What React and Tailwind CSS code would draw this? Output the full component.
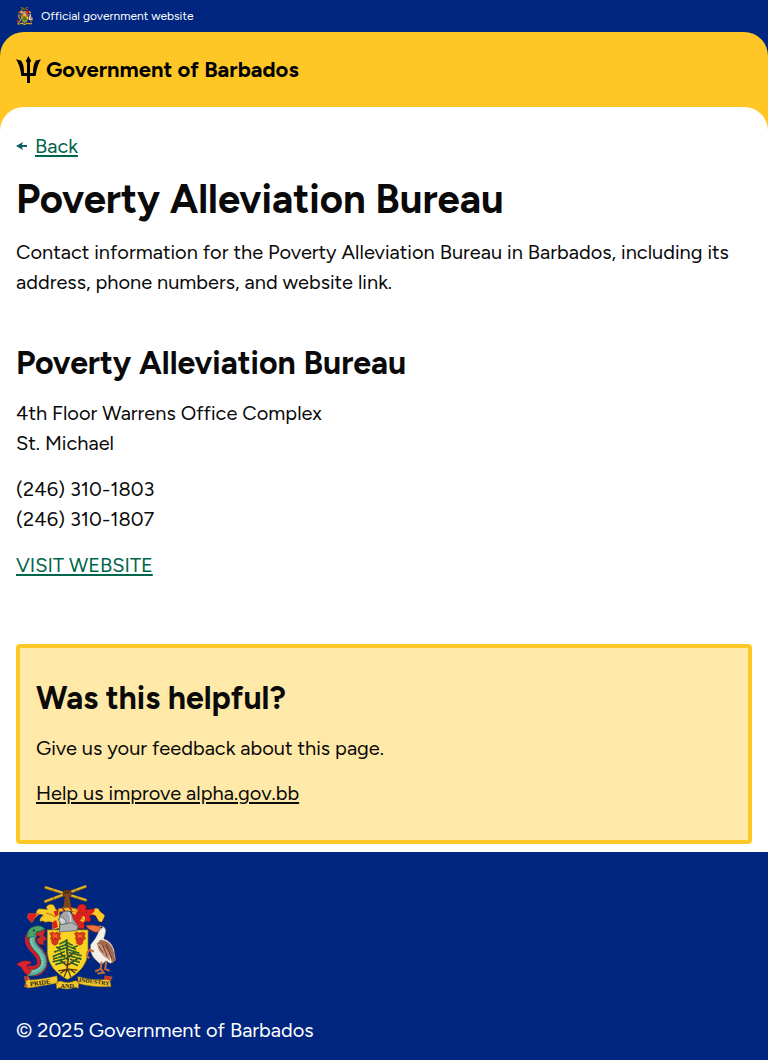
import React from "react";

function CoatOfArms({ className, title }) {
  return (
    <svg viewBox="18 22 306 322" className={className} role="img" aria-label={title}>
      {/* crossed sugar canes and raised arm */}
      <g strokeLinecap="round" fill="none">
        <path d="M107 74 L228 29 M108 32 L229 70" stroke="#8a6a10" strokeWidth="9" />
        <path d="M107 73 L228 28 M109 31 L229 69" stroke="#e3b32c" strokeWidth="6" />
        <path d="M130 37 v4 M200 38 v4 M132 62 v4 M205 61 v4" stroke="#8a6a10" strokeWidth="3" />
      </g>
      <path d="M160 94 L165 60 L160 53 L162 42 L171 38 L184 41 L186 53 L181 60 L187 94Z" fill="#7a4522" stroke="#351c10" strokeWidth="2" />
      <path d="M162 47 h20 M168 39 v12 M175 39 v12" stroke="#351c10" strokeWidth="1.5" />
      {/* mantling */}
      <path d="M150 102 Q138 101 135 90 Q134 81 121 82 Q105 88 113 98 Q98 96 88 96 Q81 97 78 111 L57 110 Q51 116 54 125 L66 138 L74 126 L82 117 Q91 109 101 116 Q88 122 91 135 Q99 130 106 137 Q119 133 128 137 L128 160 L151 154Z" fill="#f8cc27" stroke="#7b5412" strokeWidth="1.5" />
      <path d="M78 111 L57 109 L52 125 L66 137 L75 124 Q78 113 91 107Z M132 104 L145 100 L147 114 L138 120Z M128 137 L140 130 L145 151 L129 158Z" fill="#df201e" />
      <path d="M188 103 Q203 99 205 90 Q209 80 223 82 Q236 89 228 99 L250 97 Q264 92 271 103 L286 115 L281 132 L270 136 L260 119 Q248 111 240 119 Q249 125 241 136 Q231 132 224 138 L225 157 L187 153Z" fill="#df201e" stroke="#78151b" strokeWidth="1.5" />
      <path d="M255 96 Q268 91 272 104 L287 116 L278 136 L269 134 L260 117 Q253 112 243 113 Q260 106 255 96Z M193 101 L207 99 L197 114 L187 109Z M220 119 Q233 116 223 137 L212 132Z" fill="#f8cc27" />
      <path d="M137 96 Q145 105 158 102 M109 109 Q125 111 137 121 M203 107 Q220 111 236 107 M205 126 Q215 122 223 129" stroke="#8a3515" strokeWidth="2" fill="none" />
      {/* helm */}
      <path d="M145 96 Q174 88 203 96 L198 106 Q174 99 149 106Z" fill="#efbd27" stroke="#7b5412" strokeWidth="1.5" />
      <path d="M158 94 l8 9 M179 91 l8 10" stroke="#cf2020" strokeWidth="5" />
      <path d="M152 116 Q161 101 177 103 Q189 107 191 127 L207 149 L202 163 H149 L152 140 L147 128Z" fill="#a5a8aa" stroke="#4b4f52" strokeWidth="2" />
      <path d="M151 120 Q166 121 171 139 L155 146 L148 131Z" fill="#c9cbcc" stroke="#5b5e60" strokeWidth="2" />
      <path d="M177 106 Q186 119 184 138 L203 149 M156 153 L184 139 M153 128 l10 5" stroke="#e2e3e3" strokeWidth="3" fill="none" />
      {/* shield */}
      <path d="M113 160 H236 V230 Q230 282 174 310 Q118 282 113 230Z" fill="#f9d423" stroke="#a98316" strokeWidth="2" />
      {/* helm base over the shield edge */}
      <path d="M151 145 L186 138 L206 149 L202 162 L150 166Z" fill="#b1b4b5" stroke="#4b4f52" strokeWidth="2" />
      <g fill="#d9341e" stroke="#9e2a15" strokeWidth="1.5">
        <path d="M120 170 l9-4 7 4 7-4 10 4-3 9 4 8-10 4-6-4-7 4-9-4 3-8Z" />
        <path d="M195 170 l9-4 7 4 7-4 10 4-3 9 4 8-10 4-6-4-7 4-9-4 3-8Z" />
        <path d="M125 190 q12-6 22 0 l-3 12 -8 5 -9-6Z M200 190 q12-6 22 0 l-3 12 -8 5 -9-6Z" />
      </g>
      <path d="M129 173 l15 10 M130 184 l14-10 M204 173 l15 10 M205 184 l14-10" stroke="#f08b1e" strokeWidth="3" />
      {/* bearded fig tree */}
      <path d="M172 286 L176 248 L170 200 M174 270 L151 250 M177 266 L204 247 M175 250 L151 230 M176 244 L197 224" stroke="#573614" strokeWidth="5" fill="none" />
      <path d="M173 278 L152 292 M174 278 L164 302 M175 278 L184 303 M177 277 L198 290 M172 280 L146 284 M177 279 L204 282" stroke="#513516" strokeWidth="4" fill="none" />
      <g fill="none" stroke="#235a2c" strokeWidth="5" strokeLinecap="round" strokeDasharray="4 4">
        <path d="M169 193 L150 203 M171 198 L188 206 M168 205 L144 214 M174 209 L198 218" />
        <path d="M169 214 L134 227 M175 219 L208 230 M164 226 L131 240 M180 229 L216 238" />
        <path d="M166 237 L129 249 M180 238 L216 249 M165 248 L131 256 M183 249 L210 258" />
        <path d="M166 257 L138 265 M185 259 L205 268 M152 218 L138 211 M192 213 L205 208 M172 190 L174 240" />
      </g>
      <g fill="none" stroke="#4c8f35" strokeWidth="3" strokeLinecap="round" strokeDasharray="3 8">
        <path d="M155 199 L184 200 M148 211 L194 212 M141 225 L205 224 M133 244 L214 243 M139 257 L207 254" />
      </g>
      {/* dolphin */}
      <g fill="none" strokeLinecap="round">
        <path d="M70 170 Q52 190 72 213 Q103 240 97 266 Q88 288 61 284" stroke="#c71f2b" strokeWidth="32" />
        <path d="M74 170 Q58 192 78 214 Q108 241 101 267 Q91 290 59 291" stroke="#1d5652" strokeWidth="19" />
        <path d="M74 170 Q58 192 78 214 Q108 241 101 267 Q91 290 59 291" stroke="#67b8a3" strokeWidth="16" />
        <path d="M70 172 Q54 194 76 217 Q104 241 97 267 Q90 283 60 286" stroke="#b6ded0" strokeWidth="3" strokeDasharray="2 6" />
        <path d="M80 172 Q65 192 83 211 Q113 239 107 267 Q97 294 60 296" stroke="#31847d" strokeWidth="3" strokeDasharray="3 6" />
      </g>
      <path d="M54 298 Q38 286 34 273 L20 264 Q36 250 57 254 L66 260 L50 267 Q54 280 65 285Z" fill="#dc222d" stroke="#761b25" strokeWidth="1.5" />
      <path d="M88 164 L108 159 L101 175 L111 188 L101 194 L104 206 L87 203 L80 190 L91 180 L76 174Z" fill="#c92b28" stroke="#7a1b22" strokeWidth="1.5" />
      <path d="M52 184 Q50 161 65 153 Q80 144 95 149 L106 157 L91 164 L79 166 L74 180Z" fill="#4ba269" stroke="#1d5652" strokeWidth="2" />
      <circle cx="72" cy="162" r="3" fill="#172f2c" />
      {/* pelican */}
      <path d="M259 152 Q271 143 285 151 Q294 160 288 174 L284 187 Q306 194 315 219 L320 251 L304 262 L291 254 L276 266 L257 249 Q239 229 244 204 Q260 186 267 169Z" fill="#f2f1e9" stroke="#5b4741" strokeWidth="1.5" />
      <path d="M274 190 Q305 192 314 226 L319 251 L309 262 Q304 229 282 211 L263 202Z" fill="#a5694f" />
      <path d="M262 200 Q284 205 300 230 L304 254 L284 240 L269 222Z" fill="#c69176" />
      <path d="M269 209 L282 229 M280 205 L295 241 M291 203 L309 248" stroke="#67382f" strokeWidth="3" />
      <path d="M273 150 Q252 142 229 147 Q236 160 258 167 Q269 168 272 160Z" fill="#ed723d" stroke="#8b321b" strokeWidth="2" />
      <circle cx="277" cy="153" r="3" fill="#18120f" />
      <path d="M254 226 L242 220 L235 227 L233 239 L240 246 M277 256 L275 278 L258 286 M275 278 L284 290 L265 292 M292 254 L288 278 L301 284" stroke="#c46a3b" strokeWidth="6" fill="none" />
      {/* motto ribbon */}
      <path d="M43 302 L55 301 L60 312 Q94 310 142 299 L145 321 Q95 330 57 336 L43 332 L48 319Z M205 301 Q249 314 287 310 L287 299 L310 303 L303 315 L306 332 Q247 334 207 322Z M139 318 L153 315 Q175 324 197 314 L209 317 L207 337 L197 334 Q174 344 151 335 L141 338Z" fill="#f2c628" stroke="#81601a" strokeWidth="1.5" />
      <path d="M43 302 L55 301 L56 311 L45 317Z M285 299 L309 303 L303 313 L287 310Z M44 323 L54 328 L48 334Z" fill="#c8332a" />
      <g fill="#23201a" fontFamily="Liberation Serif, serif" fontSize="19" fontWeight="700">
        <text x="61" y="331" transform="rotate(-8 61 331)" fontSize="20">PRIDE</text>
        <text x="153" y="336">AND</text>
        <text x="208" y="317" transform="rotate(7 208 317)" fontSize="18">INDUSTRY</text>
      </g>
    </svg>
  );
}

function Trident() {
  return (
    <svg viewBox="0 0 75 81" className="h-[27px] w-[25px] shrink-0" fill="#000" aria-hidden="true">
      <path d="M37 0 L46 16 Q43 17 42 21 V51 H51 Q51 25 59 15 L56 15 L75 10 Q63 27 59 60 H42 V81 H33 V60 H16 Q12 27 0 10 L19 15 L16 15 Q24 25 24 51 H33 V21 Q32 17 29 16Z" />
    </svg>
  );
}

function BackArrow() {
  return (
    <svg viewBox="0 0 12 12" className="size-3 shrink-0" aria-hidden="true">
      <path d="M0 6 L7 2 L6 5 H11 V7 H6 L7 10Z" fill="#0e5f64" />
    </svg>
  );
}

const linkStyle = "underline decoration-2 underline-offset-2";
const sectionHeading = "text-[32px] leading-9 font-bold";

export default function App() {
  return (
    <div className="flex min-h-screen flex-col bg-[#00267f] font-['Figtree',Lato,sans-serif] text-xl leading-[30px] text-[#0a0a0a]">
      <div className="flex h-8 items-center gap-2 px-4 text-xs text-white">
        <CoatOfArms className="h-[18px] w-[17px]" title="Coat of arms" />
        <span>Official government website</span>
      </div>
      <div className="rounded-t-3xl bg-[#ffc726]">
        <header className="flex h-[75px] items-center px-4">
          <a href="/" className="flex items-center gap-[5px] text-[22px] font-bold text-black">
            <Trident />
            Government of Barbados
          </a>
        </header>
        <main className="rounded-t-3xl bg-white px-4 pt-6 pb-2">
          <a href="/" className="flex w-fit items-center gap-[7px] text-[#00654a]">
            <BackArrow />
            <span className={linkStyle}>Back</span>
          </a>
          <h1 className="mt-4 text-[40px] leading-[44px] font-bold">Poverty Alleviation Bureau</h1>
          <p className="mt-4">
            Contact information for the Poverty Alleviation Bureau in Barbados, including its address, phone numbers, and website link.
          </p>
          <section className="mt-12">
            <h2 className={sectionHeading}>Poverty Alleviation Bureau</h2>
            <address className="mt-[17px] space-y-4 not-italic">
              <p>4th Floor Warrens Office Complex<br />St. Michael</p>
              <p>(246) 310-1803<br />(246) 310-1807</p>
              <p><a href="/website" className={`${linkStyle} text-[#00654a]`}>VISIT WEBSITE</a></p>
            </address>
          </section>
          <section className="mt-16 rounded-sm border-4 border-[#ffc726] bg-[#ffe9a8] px-4 py-8">
            <h2 className={sectionHeading}>Was this helpful?</h2>
            <p className="mt-[17px]">Give us your feedback about this page.</p>
            <p className="mt-[15px]"><a href="/feedback" className={linkStyle}>Help us improve alpha.gov.bb</a></p>
          </section>
        </main>
      </div>
      <footer className="px-4 pt-8 pb-4 text-white">
        <CoatOfArms className="h-[107px] w-[101px]" title="Coat of arms of Barbados" />
        <p className="mt-6">© 2025 Government of Barbados</p>
      </footer>
    </div>
  );
}
